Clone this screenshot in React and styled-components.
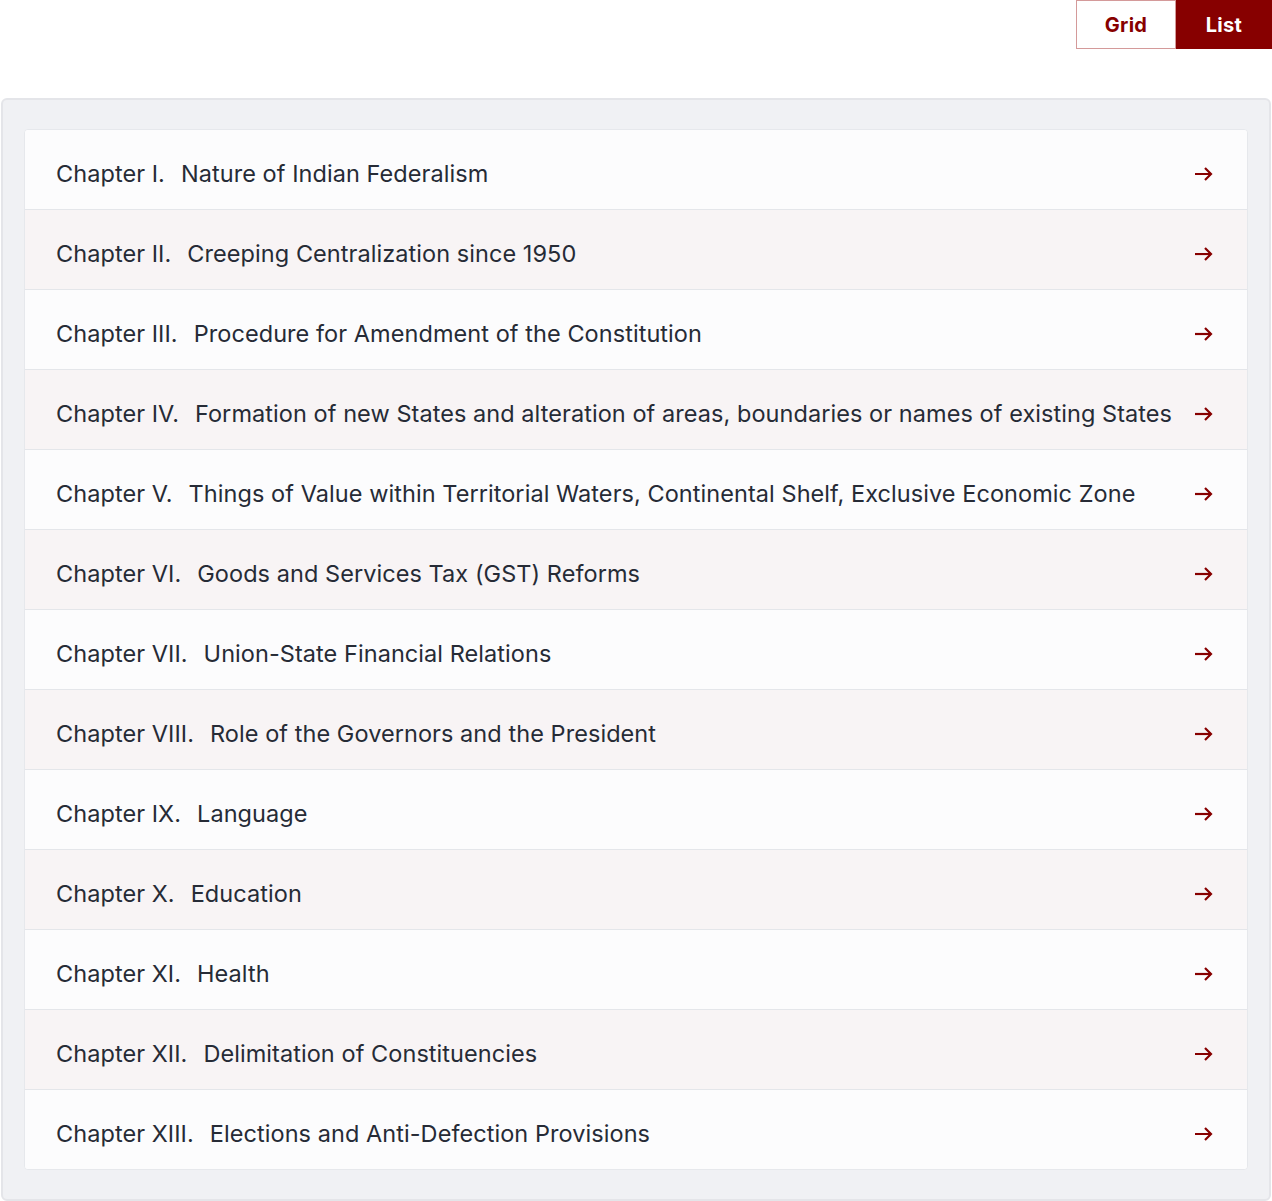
import React from "react";
import styled, { createGlobalStyle } from "styled-components";

const Global = createGlobalStyle`
  html, body { margin: 0; padding: 0; background: #ffffff; }
  body { font-family: Inter, "Noto Sans", sans-serif; }
`;

const Page = styled.div`
  width: 1272px;
  display: flex;
  flex-direction: column;
`;

const Toolbar = styled.div`
  display: flex;
  justify-content: flex-end;
  height: 49px;
  margin-bottom: 49px;
`;

const ToggleButton = styled.button`
  width: ${(p) => (p.$first ? "100px" : "96px")};
  height: 49px;
  font-family: Inter, "Noto Sans", sans-serif;
  font-size: 20px;
  font-weight: 700;
  cursor: pointer;
  border: 1px solid ${(p) => (p.$active ? "#870000" : "#d49a9a")};
  background: ${(p) => (p.$active ? "#870000" : "#ffffff")};
  color: ${(p) => (p.$active ? "#ffffff" : "#870000")};
  padding: 0;
  letter-spacing: 0.3px;
`;

const Panel = styled.div`
  margin: 0 1px;
  border: 2px solid #e4e5e9;
  border-radius: 6px;
  background: #f0f1f4;
  padding: 29px 21px 29px 21px;
`;

const List = styled.ul`
  list-style: none;
  margin: 0;
  padding: 0;
  border: 1px solid #e6e8ec;
  border-radius: 4px;
  overflow: hidden;
  background: #fcfcfd;
`;

const Row = styled.li`
  box-sizing: border-box;
  height: ${(p) => (p.$first ? "79px" : "80px")};
  display: flex;
  align-items: center;
  justify-content: space-between;
  padding: 8px 32px 0 31px;
  background: ${(p) => (p.$alt ? "#f8f4f5" : "#fcfcfd")};
  border-top: ${(p) => (p.$first ? "none" : "1px solid #e4e6ea")};
`;

const Title = styled.span`
  font-family: Inter, "Noto Sans", sans-serif;
  font-size: 23.5px;
  color: #262b36;
  letter-spacing: 0.06px;
  white-space: nowrap;
`;

const Label = styled.span`
  margin-right: 16px;
`;

const Arrow = styled.svg`
  width: 24px;
  height: 24px;
  flex: none;
`;

const chapters = [
  ["I.", "Nature of Indian Federalism"],
  ["II.", "Creeping Centralization since 1950"],
  ["III.", "Procedure for Amendment of the Constitution"],
  ["IV.", "Formation of new States and alteration of areas, boundaries or names of existing States"],
  ["V.", "Things of Value within Territorial Waters, Continental Shelf, Exclusive Economic Zone"],
  ["VI.", "Goods and Services Tax (GST) Reforms"],
  ["VII.", "Union-State Financial Relations"],
  ["VIII.", "Role of the Governors and the President"],
  ["IX.", "Language"],
  ["X.", "Education"],
  ["XI.", "Health"],
  ["XII.", "Delimitation of Constituencies"],
  ["XIII.", "Elections and Anti-Defection Provisions"],
];

export default function App() {
  return (
    <Page>
      <Global />
      <Toolbar>
        <ToggleButton $first>Grid</ToggleButton>
        <ToggleButton $active>List</ToggleButton>
      </Toolbar>
      <Panel>
        <List>
          {chapters.map(([num, title], i) => (
            <Row key={num} $alt={i % 2 === 1} $first={i === 0}>
              <Title>
                <Label>Chapter {num}</Label>
                {title}
              </Title>
              <Arrow viewBox="0 0 24 24" fill="none" stroke="#870000" strokeWidth="2.2" strokeLinecap="butt">
                <path d="M4 12h16" />
                <path d="M14 6l6 6-6 6" />
              </Arrow>
            </Row>
          ))}
        </List>
      </Panel>
    </Page>
  );
}
